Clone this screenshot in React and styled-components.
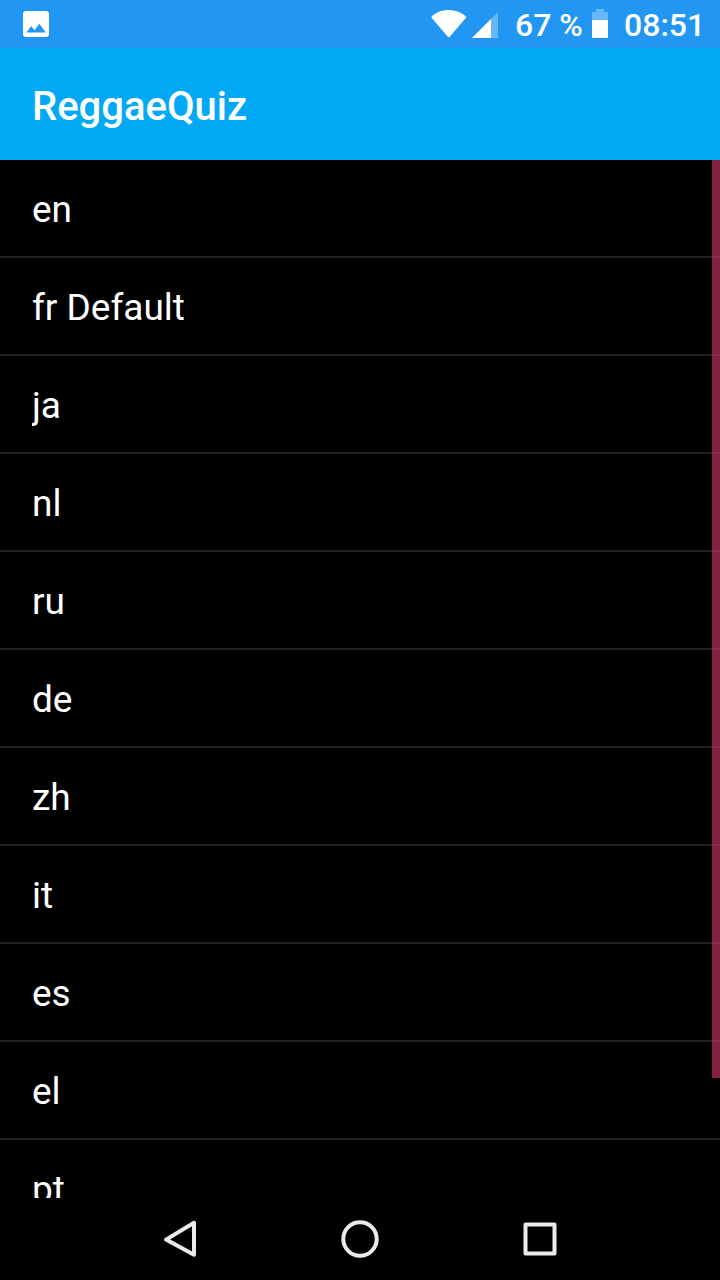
import React from 'react';
import styled, { createGlobalStyle } from 'styled-components';

const GlobalStyle = createGlobalStyle`
  * { box-sizing: border-box; }
  body {
    margin: 0;
    background: #000;
    font-family: Roboto, 'Liberation Sans', sans-serif;
    color: #fff;
  }
`;

const Screen = styled.div`
  display: flex;
  flex-direction: column;
  width: 720px;
  height: 1280px;
  overflow: hidden;
  background: #000;
`;

const StatusBar = styled.header`
  display: flex;
  flex: none;
  height: 48px;
  padding: 0 17px 0 23px;
  background: #2196f3;
  justify-content: space-between;
`;

const StatusGroup = styled.div`
  display: flex;
  height: 48px;
  align-items: flex-start;
`;

const StatusIcon = styled.svg`
  display: block;
  flex: none;
  height: 48px;
  width: ${(p) => p.$width}px;
  margin-right: ${(p) => p.$gap || 0}px;
  fill: #fff;
`;

const StatusText = styled.span`
  font-size: 32px;
  font-weight: 500;
  line-height: 50px;
  width: ${(p) => p.$width}px;
  margin-right: ${(p) => p.$gap || 0}px;
  white-space: nowrap;
`;

const AppBar = styled.div`
  display: flex;
  flex: none;
  align-items: center;
  height: 112px;
  padding: 6px 32px 0;
  background: #03a9f4;
`;

const Title = styled.h1`
  margin: 0;
  font-size: 40px;
  font-weight: 500;
  line-height: 48px;
`;

const ListArea = styled.main`
  position: relative;
  flex: none;
  height: 1038px;
  overflow: hidden;
`;

const LanguageList = styled.ul`
  margin: 0;
  padding: 0;
  list-style: none;
`;

const LanguageRow = styled.li`
  display: flex;
  align-items: center;
  height: 98px;
  padding: 4px 32px 0;
  border-bottom: 2px solid #212121;
`;

const LanguageName = styled.span`
  flex: 1;
  overflow: hidden;
  font-size: 37px;
  line-height: 48px;
`;

const ScrollThumb = styled.div`
  position: absolute;
  top: 0;
  right: 0;
  width: 8px;
  height: 918px;
  background: rgba(206, 52, 106, 0.64);
`;

const NavBar = styled.nav`
  display: flex;
  flex: 1;
  justify-content: center;
  background: #000;
`;

const NavButton = styled.button`
  width: 180px;
  height: 82px;
  padding: 0;
  border: 0;
  background: none;
`;

const NavIcon = styled.svg`
  display: block;
  width: 180px;
  height: 82px;
  fill: none;
  stroke: #ebebeb;
  stroke-width: 4;
  stroke-linejoin: round;
`;

const languages = ['en', 'fr Default', 'ja', 'nl', 'ru', 'de', 'zh', 'it', 'es', 'el', 'pt'];

export default function App() {
  return (
    <Screen>
      <GlobalStyle />
      <StatusBar>
        <StatusGroup>
          <StatusIcon $width={26} viewBox="0 0 26 48">
            <path
              fillRule="evenodd"
              d="M3 11H23Q26 11 26 14V34Q26 37 23 37H3Q0 37 0 34V14Q0 11 3 11ZM8.2 26L3.5 32.4H22.7L16.4 23.8L11.5 30.2Z"
            />
          </StatusIcon>
        </StatusGroup>
        <StatusGroup>
          <StatusIcon $width={36} $gap={5} viewBox="0 0 36 48">
            <path d="M.8 16.3C5.5 12 11.5 10 17.8 10S30 12 34.8 16.3Q35.4 17 34.8 17.9L19 36.6Q17.8 37.8 16.6 36.6L.8 17.9Q.2 17 .8 16.3Z" />
          </StatusIcon>
          <StatusIcon $width={26} $gap={17} viewBox="0 0 26 48">
            <path d="M0 38L26 12V38Z" opacity=".32" />
            <path d="M0 38L19 19V38Z" />
          </StatusIcon>
          <StatusText $width={67} $gap={10}>67 %</StatusText>
          <StatusIcon $width={16} $gap={16} viewBox="0 0 16 48">
            <path d="M0 20V13Q0 12 1 12H4V9H12V12H15Q16 12 16 13V20Z" opacity=".32" />
            <path d="M0 20H16V37Q16 38 15 38H1Q0 38 0 37Z" />
          </StatusIcon>
          <StatusText $width={79}>08:51</StatusText>
        </StatusGroup>
      </StatusBar>
      <AppBar>
        <Title>ReggaeQuiz</Title>
      </AppBar>
      <ListArea>
        <LanguageList>
          {languages.map((name) => (
            <LanguageRow key={name}>
              <LanguageName>{name}</LanguageName>
            </LanguageRow>
          ))}
        </LanguageList>
        <ScrollThumb />
      </ListArea>
      <NavBar>
        <NavButton aria-label="Back">
          <NavIcon viewBox="90 0 180 82">
            <path d="M194 24.2V56.2L166 41Z" transform="translate(0 .6)" />
          </NavIcon>
        </NavButton>
        <NavButton aria-label="Home">
          <NavIcon viewBox="270 0 180 82">
            <circle cx="360" cy="41" r="16.7" />
          </NavIcon>
        </NavButton>
        <NavButton aria-label="Recent apps">
          <NavIcon viewBox="450 0 180 82">
            <rect x="525.5" y="26.5" width="29" height="29" />
          </NavIcon>
        </NavButton>
      </NavBar>
    </Screen>
  );
}
